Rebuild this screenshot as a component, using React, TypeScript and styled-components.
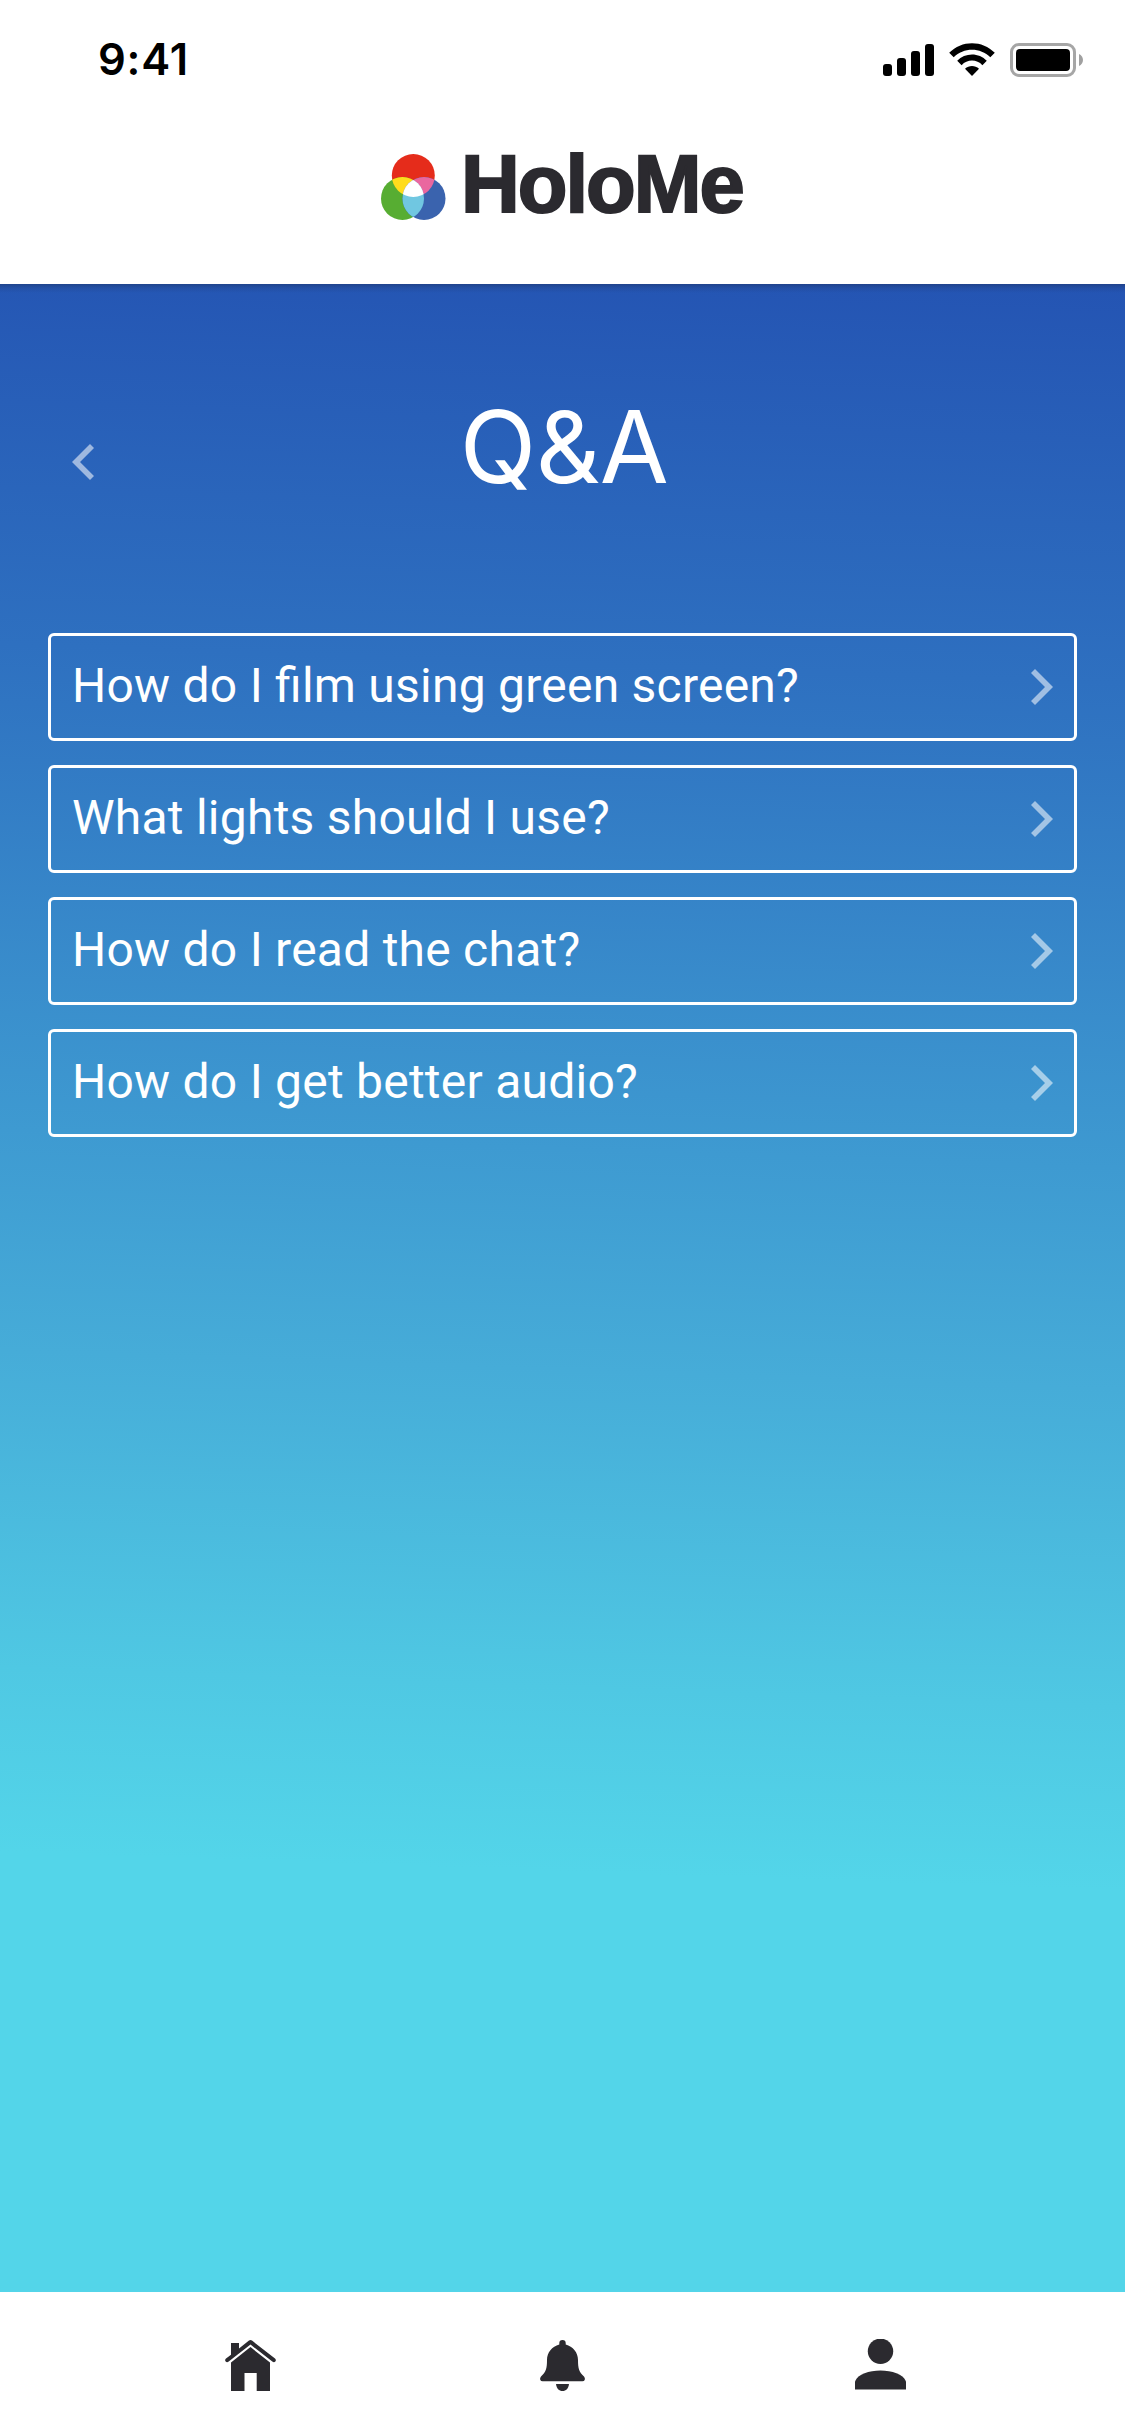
import React from 'react';
import styled, { createGlobalStyle } from 'styled-components';

const INK = '#2b2a2f';

const GlobalStyle = createGlobalStyle`
  * { box-sizing: border-box; }
  body { margin: 0; background: #fff; font-family: Roboto, "Liberation Sans", sans-serif; }
`;

const Screen = styled.div`
  width: 1125px;
  height: 2436px;
  display: flex;
  flex-direction: column;
  overflow: hidden;
  background: #fff;
`;

const Header = styled.header`
  height: 284px;
  flex: none;
  background: #fff;
`;

const StatusBar = styled.div`
  height: 120px;
  padding: 0 41px 0 98px;
  display: flex;
  justify-content: space-between;
  align-items: center;
`;

const Time = styled.span`
  padding-bottom: 2px;
  font: 600 43.5px/52px Inter, sans-serif;
  letter-spacing: 0.8px;
  color: #000;
`;

const StatusIcons = styled.svg`
  width: 201px;
  height: 34px;
  display: block;
`;

const Brand = styled.div`
  height: 132px;
  padding-left: 381px;
  display: flex;
  align-items: center;
`;

const LogoMark = styled.svg`
  width: 65px;
  height: 67px;
  flex: none;
  margin-top: 2px;
`;

const BrandName = styled.span`
  margin: 0 0 4px 15px;
  font: 700 81.4px/96px "Liberation Sans", sans-serif;
  letter-spacing: -2px;
  -webkit-text-stroke: 2px ${INK};
  color: ${INK};
`;

const Content = styled.main`
  flex: 1;
  background:
    linear-gradient(180deg, rgba(25, 40, 80, 0.4) 0, rgba(25, 40, 80, 0.15) 4px, rgba(25, 40, 80, 0) 9px),
    linear-gradient(182deg, #2454b3 0%, #2e70c0 19.5%, #3e9ad1 43.2%, #46acd8 54%, #4fc8e3 69.5%, #53d5e9 78.5%, #53d5e9 100%);
`;

const TitleRow = styled.div`
  height: 349px;
  padding: 0 72px;
  display: grid;
  grid-template-columns: 22px 1fr 22px;
`;

const BackButton = styled.button`
  margin: 160px 0 0;
  padding: 0;
  width: 22px;
  height: 36px;
  border: 0;
  background: none;
`;

const Title = styled.h1`
  margin: 103px 0 0 3px;
  font: 400 100px/120px Inter, sans-serif;
  letter-spacing: -0.4px;
  text-align: center;
  color: #fff;
`;

const Questions = styled.ul`
  margin: 0;
  padding: 0 48px;
  list-style: none;
  display: flex;
  flex-direction: column;
  gap: 24px;
`;

const Question = styled.li`
  height: 108px;
  padding: 0 21px 0 21px;
  display: flex;
  align-items: center;
  justify-content: space-between;
  border: 3px solid #fff;
  border-radius: 6px;
`;

const QuestionText = styled.span`
  font-size: 48px;
  line-height: 56px;
  letter-spacing: 0.24px;
  font-feature-settings: "liga" 1;
  white-space: nowrap;
  color: #fff;
  padding-bottom: 3px;
`;

const Chevron = styled.svg<{ $flip?: boolean }>`
  display: block;
  width: 22px;
  height: 36px;
  transform: ${(p) => (p.$flip ? 'scaleX(-1)' : 'none')};
`;

const TabBar = styled.nav`
  height: 144px;
  flex: none;
  padding: 47px 0 0 225px;
  display: flex;
  gap: 264px;
  background: #fff;
`;

const TabIcon = styled.svg`
  width: 51px;
  height: 53px;
  flex: none;
  fill: ${INK};
`;

const ChevronIcon = ({ flip }: { flip?: boolean }) => (
  <Chevron $flip={flip} viewBox="0 0 22 36">
    <path d="M4 0 L22 18 L4 36 L0 32 L14 18 L0 4 Z" fill="#fff" fillOpacity="0.55" />
  </Chevron>
);

const questions = [
  'How do I film using green screen?',
  'What lights should I use?',
  'How do I read the chat?',
  'How do I get better audio?',
];

export default function App() {
  return (
    <Screen>
      <GlobalStyle />
      <Header>
        <StatusBar>
          <Time>9:41</Time>
          <StatusIcons viewBox="0 0 201 34">
            <rect x="0" y="21" width="9" height="12" rx="3" />
            <rect x="14" y="15" width="9" height="18" rx="3" />
            <rect x="28" y="8" width="9" height="25" rx="3" />
            <rect x="42" y="1" width="9" height="32" rx="3" />
            <path d="M66.2 9.8 C78.5 -3.1 99.5 -3.1 111.8 9.8 L107.3 14.2 C97.5 4.2 80.5 4.2 70.7 14.2 Z" />
            <path d="M74.2 17.8 C82 9.3 96 9.3 103.8 17.8 L99.4 22.2 C93.8 16 84.2 16 78.6 22.2 Z" />
            <path d="M82 25.8 C86 22 92 22 96 25.8 L89 33 Z" />
            <rect x="128.5" y="1.5" width="63" height="31" rx="7.5" fill="none" stroke="#a6a6a6" strokeWidth="3" />
            <rect x="133" y="6" width="54" height="22" rx="4" />
            <path d="M196 11 C198.500 12 200 14.500 200 17 C200 19.500 198.500 22 196 23 Z" fill="#a0a0a0" />
          </StatusIcons>
        </StatusBar>
        <Brand>
          <LogoMark viewBox="0 0 65 67">
            <defs>
              <clipPath id="redDisc"><circle cx="32.300" cy="21.500" r="21.500" /></clipPath>
              <clipPath id="greenDisc"><circle cx="21.500" cy="44.500" r="21.500" /></clipPath>
            </defs>
            <circle cx="32.300" cy="21.500" r="21.500" fill="#e52c1b" />
            <circle cx="21.500" cy="44.500" r="21.500" fill="#57ad32" />
            <circle cx="43" cy="44.500" r="21.500" fill="#3a63ae" />
            <circle cx="21.500" cy="44.500" r="21.500" fill="#ffdc1c" clipPath="url(#redDisc)" />
            <circle cx="43" cy="44.500" r="21.500" fill="#ea679f" clipPath="url(#redDisc)" />
            <circle cx="43" cy="44.500" r="21.500" fill="#70c7e1" clipPath="url(#greenDisc)" />
            <g clipPath="url(#redDisc)">
              <circle cx="43" cy="44.500" r="21.500" fill="#fff" clipPath="url(#greenDisc)" />
            </g>
          </LogoMark>
          <BrandName>HoloMe</BrandName>
        </Brand>
      </Header>
      <Content>
        <TitleRow>
          <BackButton aria-label="Back"><ChevronIcon flip /></BackButton>
          <Title>Q&amp;A</Title>
        </TitleRow>
        <Questions>
          {questions.map((q) => (
            <Question key={q}>
              <QuestionText>{q}</QuestionText>
              <ChevronIcon />
            </Question>
          ))}
        </Questions>
      </Content>
      <TabBar>
        <TabIcon viewBox="0 -0.6 51 53">
          <path d="M6 3.500 H14 V9 L24 1 Q25.500 -0.200 27 1 L50 19 Q51.500 20.500 50.300 22 Q49 23.300 47.300 22 L25.500 5 L3.700 22 Q2 23.300 0.700 22 Q-0.500 20.500 1 19 L6 15.100 Z" />
          <path d="M25.500 7.500 L45 23 V51.500 H31.700 V33.500 H19.500 V51.500 H6 V23 Z" />
        </TabIcon>
        <TabIcon viewBox="0 0 51 53">
          <path d="M19.300 5.500 V4 Q19.300 1 22.500 1 Q25.700 1 25.700 4 V5.500 C33 7.500 38 13.500 38 21 C38 29.500 39 33 44 37.500 Q45.500 39.500 44.500 41.300 Q44 42.300 42.500 42.300 H2.500 Q1 42.300 0.500 41.300 Q-0.500 39.500 1 37.500 C6 33 7 29.500 7 21 C7 13.500 12 7.500 19.300 5.500 Z" />
          <path d="M16 45 H29 C28.500 49.500 26 52 22.500 52 C19 52 16.500 49.500 16 45 Z" />
        </TabIcon>
        <TabIcon viewBox="0 0.6 51 53">
          <circle cx="25.500" cy="12.900" r="12.700" />
          <path d="M0 51 V43 C3 35.500 14 32 25.500 32 C37 32 48 35.500 51 43 V51 Z" />
        </TabIcon>
      </TabBar>
    </Screen>
  );
}
